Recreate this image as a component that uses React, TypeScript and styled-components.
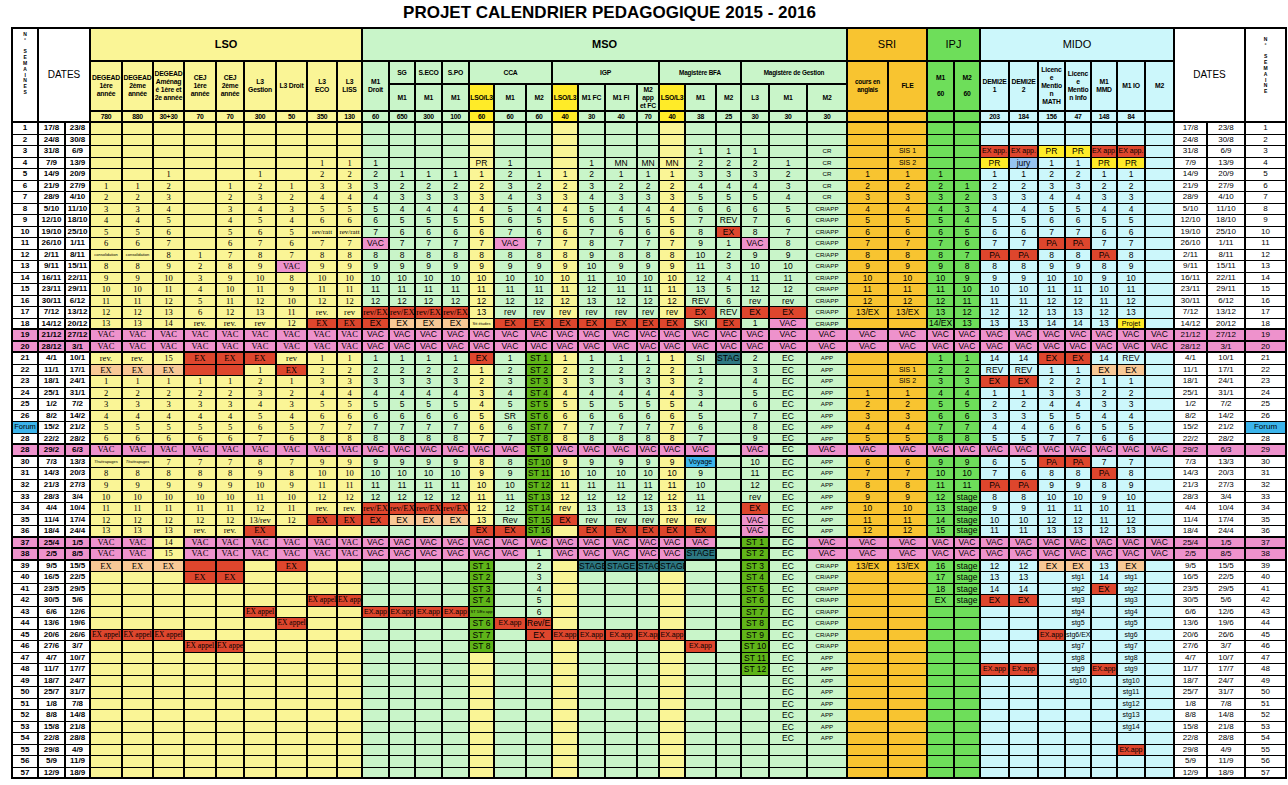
import React from 'react';
import styled, { createGlobalStyle } from 'styled-components';

const SANS = '"Liberation Sans", Arial, sans-serif';
const SERIF = '"Liberation Serif", "Times New Roman", serif';

const C = {
  white: '#ffffff',
  lso: '#FAF596',
  mso: '#C9F5C9',
  hi: '#FFEB28',
  sri: '#F8C430',
  ipj: '#6EDE5A',
  mido: '#CCF7FB',
  vac: '#EE92CC',
  red: '#DE462D',
  peach: '#F8C896',
  st: '#5FB419',
  teal: '#2D7882',
  blue: '#3CB4EB',
  jury: '#96C3F0',
};

const CODE: Record<string, string> = {
  r: C.red, p: C.peach, s: C.st, t: C.teal, b: C.blue, j: C.jury, y: C.hi, l: C.lso, v: C.vac,
};

const WIDTHS = [26, 27, 25, 32, 31, 31, 32, 28, 32, 31, 30, 25, 27, 26, 27, 27, 25, 32, 26, 26, 27, 32, 22, 26, 31, 25, 28, 38, 40, 41, 39, 27, 26, 29, 29, 27, 26, 26, 28, 29, 33, 38, 41];

const GlobalStyle = createGlobalStyle`
  html, body { margin: 0; padding: 0; background: #fff; }
  body { font-family: ${SANS}; color: #000; }
`;

const Page = styled.div`
  width: 1288px;
  height: 785px;
  overflow: hidden;
`;

const Title = styled.div`
  box-sizing: border-box;
  height: 27px;
  padding: 4px 69px 0 0;
  text-align: center;
  font-family: ${SANS};
  font-weight: 700;
  font-size: 17px;
  line-height: 17px;
`;

const SheetWrap = styled.div`
  padding-left: 11px;
`;

const Sheet = styled.div`
  display: grid;
  grid-template-columns: ${WIDTHS.map((w) => `${w}px`).join(' ')};
  grid-template-rows: 33px 23px 27px 11px repeat(57, 11.526px);
  width: max-content;
  border-left: 2px solid #000;
  border-top: 2px solid #000;
`;

const Head = styled.div<{
  $c: number; $cs: number; $r: number; $rs: number; $bg: string;
  $size: number; $bold: boolean; $lh: number; $top?: number;
}>`
  grid-column: ${(p) => p.$c + 1} / span ${(p) => p.$cs};
  grid-row: ${(p) => p.$r + 1} / span ${(p) => p.$rs};
  box-sizing: border-box;
  background: ${(p) => p.$bg};
  border-right: 2px solid #000;
  border-bottom: 2px solid #000;
  display: flex;
  flex-direction: column;
  align-items: center;
  justify-content: ${(p) => (p.$top !== undefined ? 'flex-start' : 'center')};
  padding-top: ${(p) => p.$top ?? 0}px;
  text-align: center;
  white-space: pre-line;
  font-family: ${SANS};
  font-size: ${(p) => p.$size}px;
  font-weight: ${(p) => (p.$bold ? 700 : 400)};
  line-height: ${(p) => p.$lh}px;
  letter-spacing: ${(p) => (p.$size < 8 ? '-0.2px' : '0')};
  overflow: hidden;
  min-width: 0;
`;

const Letter = styled.span`
  display: block;
  height: 5.8px;
  font-size: 5px;
  line-height: 5.8px;
  font-weight: 700;
`;

const Cell = styled.div<{ $bg: string; $size: number; $serif: boolean; $bold: boolean; $thick: boolean }>`
  box-sizing: border-box;
  background: ${(p) => p.$bg};
  border-right: 2px solid #000;
  border-bottom: ${(p) => (p.$thick ? 2 : 1)}px solid #000;
  font-family: ${(p) => (p.$serif ? SERIF : SANS)};
  font-size: ${(p) => p.$size}px;
  font-weight: ${(p) => (p.$bold ? 700 : 400)};
  line-height: ${(p) => (p.$thick ? 9.5 : 10.5)}px;
  text-align: center;
  white-space: nowrap;
  overflow: hidden;
  min-width: 0;
`;

type HeadDef = {
  c: number; cs?: number; r: number; rs?: number; t?: string; bg?: string;
  size?: number; bold?: boolean; lh?: number; letters?: string[]; top?: number;
};

const SUB = { size: 6.8, bold: true, lh: 8 };

const HEAD: HeadDef[] = [
  { c: 0, r: 0, rs: 4, bg: C.white, letters: ['N', '°', '', 'S', 'E', 'M', 'A', 'I', 'N', 'E', 'S'], top: 3 },
  { c: 1, cs: 2, r: 0, rs: 4, t: 'DATES', bg: C.white, size: 10, lh: 12 },
  { c: 3, cs: 9, r: 0, t: 'LSO', bg: C.lso, size: 11, bold: true, lh: 13 },
  { c: 12, cs: 17, r: 0, t: 'MSO', bg: C.mso, size: 11, bold: true, lh: 13 },
  { c: 29, cs: 2, r: 0, t: 'SRI', bg: C.sri, size: 11, lh: 13 },
  { c: 31, cs: 2, r: 0, t: 'IPJ', bg: C.ipj, size: 11, lh: 13 },
  { c: 33, cs: 7, r: 0, t: 'MIDO', bg: C.mido, size: 11, lh: 13 },
  { c: 40, cs: 2, r: 0, rs: 4, t: 'DATES', bg: C.white, size: 10, lh: 12 },
  { c: 42, r: 0, rs: 4, bg: C.white, letters: ['N', '°', '', 'S', 'E', 'M', 'A', 'I', 'N', 'E'], top: 8 },
  // LSO sub headers
  ...[
    'DEGEAD\n1ère\nannée', 'DEGEAD\n2ème\nannée', 'DEGEAD\nAménag\né 1ère et\n2e année', 'CEJ\n1ère\nannée',
    'CEJ\n2ème\nannée', 'L3\nGestion', 'L3 Droit', 'L3\nECO', 'L3\nLISS',
  ].map((t, i) => ({ c: 3 + i, r: 1, rs: 2, t, bg: C.lso, ...SUB })),
  ...['780', '880', '30+30', '70', '70', '300', '50', '350', '130'].map((t, i) => ({ c: 3 + i, r: 3, t, bg: C.lso, ...SUB })),
  // MSO
  { c: 12, r: 1, rs: 2, t: 'M1\nDroit', bg: C.mso, ...SUB },
  { c: 13, r: 1, t: 'SG', bg: C.mso, ...SUB },
  { c: 14, r: 1, t: 'S.ECO', bg: C.mso, ...SUB },
  { c: 15, r: 1, t: 'S.PO', bg: C.mso, ...SUB },
  { c: 16, cs: 3, r: 1, t: 'CCA', bg: C.mso, ...SUB },
  { c: 19, cs: 4, r: 1, t: 'IGP', bg: C.mso, ...SUB },
  { c: 23, cs: 3, r: 1, t: 'Magistère BFA', bg: C.mso, ...SUB, size: 6.4 },
  { c: 26, cs: 3, r: 1, t: 'Magistère de Gestion', bg: C.mso, ...SUB, size: 6.4 },
  ...['M1', 'M1', 'M1', 'LSO/L3', 'M1', 'M2', 'LSO/L3', 'M1 FC', 'M1 FI', 'M2\napp\net FC', 'LSO/L3', 'M1', 'M2', 'L3', 'M1', 'M2'].map(
    (t, i) => ({ c: 13 + i, r: 2, t, bg: t === 'LSO/L3' ? C.hi : C.mso, ...SUB }),
  ),
  ...['60', '650', '300', '100', '60', '60', '60', '40', '30', '40', '70', '40', '38', '25', '30', '30', '30'].map((t, i) => ({
    c: 12 + i, r: 3, t, bg: [16, 19, 23].includes(12 + i) ? C.hi : C.mso, ...SUB,
  })),
  // SRI
  { c: 29, r: 1, rs: 2, t: 'cours en\nanglais', bg: C.sri, ...SUB, size: 6.4 },
  { c: 30, r: 1, rs: 2, t: 'FLE', bg: C.sri, ...SUB },
  { c: 29, r: 3, t: '', bg: C.sri },
  { c: 30, r: 3, t: '', bg: C.sri },
  // IPJ
  { c: 31, r: 1, rs: 2, t: 'M1\n\n60', bg: C.ipj, ...SUB },
  { c: 32, r: 1, rs: 2, t: 'M2\n\n60', bg: C.ipj, ...SUB },
  { c: 31, r: 3, t: '', bg: C.ipj },
  { c: 32, r: 3, t: '', bg: C.ipj },
  // MIDO
  ...['DEMI2E\n1', 'DEMI2E\n2', 'Licenc\ne\nMentio\nn\nMATH', 'Licenc\ne\nMentio\nn Info', 'M1\nMMD', 'M1 IO', 'M2'].map((t, i) => ({
    c: 33 + i, r: 1, rs: 2, t, bg: C.mido, ...SUB,
  })),
  ...['203', '184', '156', '47', '148', '84', ''].map((t, i) => ({ c: 33 + i, r: 3, t, bg: C.mido, ...SUB })),
];

const ROWS: string[] = [
  '@',
  '@',
  '@24=1;25=1;26=1;28=CR;30=SIS 1;33=r~EX app.;34=r~EX app.;35=y~PR;36=y~PR;37=r~EX app.;38=r~EX app.',
  '@10=1;11=1;12=1;16=PR;17=1;20=1;21=MN;22=MN;23=MN;24=2;25=2;26=2;27=1;28=CR;30=SIS 2;33=y~PR;34=j~jury;35=1;36=1;37=y~PR;38=y~PR',
  ',,1,,,1,,2,2|2,1,1,1,1,2,1,1,2,1,1,1,3,3,3,2,CR|1,1|1,|1,1,2,2,1,1',
  '1,1,2,,1,2,1,3,3|3,2,2,2,2,3,2,2,3,2,2,2,4,4,4,3,CR|2,2|2,1|2,2,3,3,2,2',
  '2,2,3,,2,3,2,4,4|4,3,3,3,3,4,3,3,4,3,3,3,5,5,5,4,CR|3,3|3,2|3,3,4,4,3,3',
  '3,3,4,,3,4,3,5,5|5,4,4,4,4,5,4,4,5,4,4,4,6,6,6,5,CR/APP|4,4|4,3|4,4,5,5,4,4',
  '4,4,5,,4,5,4,6,6|6,5,5,5,5,6,5,5,6,5,5,5,7,REV,7,6,CR/APP|5,5|5,4|5,5,6,6,5,5',
  '5,5,6,,5,6,5,rev/ratt,rev/ratt|7,6,6,6,6,7,6,6,7,6,6,6,8,r~EX,8,7,CR/APP|6,6|6,5|6,6,7,7,6,6',
  '6,6,7,,6,7,6,7,7|VAC,7,7,7,7,VAC,7,7,8,7,7,7,9,1,VAC,8,CR/APP|7,7|7,6|7,7,r~PA,r~PA,7,7',
  'consolidation,consolidation,8,1,7,8,7,8,8|8,8,8,8,8,8,8,8,9,8,8,8,10,2,9,9,CR/APP|8,8|8,7|r~PA,r~PA,8,8,r~PA,8',
  '8,8,9,2,8,9,VAC,9,9|9,9,9,9,9,9,9,9,10,9,9,9,11,3,10,10,CR/APP|9,9|9,8|8,8,9,9,8,9',
  '9,9,10,3,9,10,8,10,10|10,10,10,10,10,10,10,10,11,10,10,10,12,4,11,11,CR/APP|10,10|10,9|9,9,10,10,9,10',
  '10,10,11,4,10,11,9,11,11|11,11,11,11,11,11,11,11,12,11,11,11,13,5,12,12,CR/APP|11,11|11,10|10,10,11,11,10,11',
  '11,11,12,5,11,12,10,12,12|12,12,12,12,12,12,12,12,13,12,12,12,REV,6,rev,rev,CR/APP|12,12|12,11|11,11,12,12,11,12',
  '12,12,13,6,12,13,11,rev.,rev|r~rev/EX,r~rev/EX,r~rev/EX,r~rev/EX,13,rev,rev,rev,rev,rev,rev,rev,r~EX,REV,r~EX,r~EX,CR/APP|13/EX,13/EX|13,12|12,12,13,13,12,13',
  '13,13,14,rev.,rev.,rev,12,r~EX,r~EX|r~EX,p~EX,p~EX,p~EX,Stt études,r~EX,r~EX,r~EX,r~EX,r~EX,r~EX,r~EX,SKI,r~EX,1,VAC,CR/APP|,|14/EX,13|13,13,14,14,13,y~Projet',
  'VAC*',
  'VAC*',
  'rev.,rev.,15,r~EX,r~EX,r~EX,rev,1,1|1,1,1,1,r~EX,1,s~ST 1,1,1,1,1,1,SI,t~STAGE,2,EC,APP|,|1,1|14,14,r~EX,r~EX,14,REV',
  'p~EX,p~EX,p~EX,r~,r~,1,r~EX,2,2|2,2,2,2,1,2,s~ST 2,2,2,2,2,2,1,,3,EC,APP|,SIS 1|2,2|REV,REV,1,1,p~EX,p~EX',
  '1,1,1,1,1,2,1,3,3|3,3,3,3,2,3,s~ST 3,3,3,3,3,3,2,,4,EC,APP|,SIS 2|3,3|r~EX,r~EX,2,2,1,1',
  '2,2,2,2,2,3,2,4,4|4,4,4,4,3,4,s~ST 4,4,4,4,4,4,3,,5,EC,APP|1,1|4,4|1,1,3,3,2,2',
  '3,3,3,3,3,4,3,5,5|5,5,5,5,4,5,s~ST 5,5,5,5,5,5,4,,6,EC,APP|2,2|5,5|2,2,4,4,3,3',
  '4,4,4,4,4,5,4,6,6|6,6,6,6,5,SR,s~ST 6,6,6,6,6,6,5,,7,EC,APP|3,3|6,6|3,3,5,5,4,4',
  '5,5,5,5,5,6,5,7,7|7,7,7,7,6,6,s~ST 7,7,7,7,7,7,6,,8,EC,APP|4,4|7,7|4,4,6,6,5,5',
  '6,6,6,6,6,7,6,8,8|8,8,8,8,7,7,s~ST 8,8,8,8,8,8,7,,9,EC,APP|5,5|8,8|5,5,7,7,6,6',
  'VAC,VAC,VAC,VAC,VAC,VAC,VAC,VAC,VAC|VAC,VAC,VAC,VAC,VAC,VAC,s~ST 9,VAC,VAC,VAC,VAC,VAC,VAC,,VAC,EC,VAC|VAC,VAC|VAC,VAC|VAC,VAC,VAC,VAC,VAC,VAC,VAC',
  '7/rattrapages,7/rattrapages,7,7,7,8,7,9,9|9,9,9,9,8,8,s~ST 10,9,9,9,9,9,b~Voyage,,10,EC,APP|6,6|9,9|6,5,r~PA,r~PA,7,7',
  '8,8,8,8,8,9,8,10,10|10,10,10,10,9,9,s~ST 11,10,10,10,10,10,9,,11,EC,APP|7,7|10,10|7,6,8,8,r~PA,8',
  '9,9,9,9,9,10,9,11,11|11,11,11,11,10,10,s~ST 12,11,11,11,11,11,10,,12,EC,APP|8,8|11,11|r~PA,r~PA,9,9,8,9',
  '10,10,10,10,10,11,10,12,12|12,12,12,12,11,11,s~ST 13,12,12,12,12,12,11,,rev,EC,APP|9,9|12,stage|8,8,10,10,9,10',
  '11,11,11,11,11,12,11,rev.,rev.|r~rev/EX,r~rev/EX,r~rev/EX,r~rev/EX,12,12,s~ST 14,rev,13,13,13,13,12,,r~EX,EC,APP|10,10|13,stage|9,9,11,11,10,11',
  '12,12,12,12,12,13/rev,12,r~EX,r~EX|r~EX,p~EX,p~EX,p~EX,13,Rev,s~ST 15,r~EX,rev,rev,rev,rev,l~rev,,VAC,EC,APP|11,11|14,stage|10,10,12,12,11,12',
  '13,13,13,rev.,rev.,r~EX,,,|,,,,r~EX,r~EX,s~ST 16,,r~EX,r~EX,r~EX,r~EX,r~EX,,VAC,EC,APP|12,12|15,stage|11,11,13,13,12,13',
  'VAC,VAC,14,VAC,VAC,VAC,VAC,VAC,VAC|VAC,VAC,VAC,VAC,VAC,VAC,VAC,VAC,VAC,VAC,VAC,VAC,VAC,,s~ST 1,EC,VAC|VAC,VAC|VAC,VAC|VAC,VAC,VAC,VAC,VAC,VAC,VAC',
  'VAC,VAC,15,VAC,VAC,VAC,VAC,VAC,VAC|VAC,VAC,VAC,VAC,VAC,VAC,1,VAC,VAC,VAC,VAC,VAC,t~STAGE,,s~ST 2,EC,VAC|VAC,VAC|VAC,VAC|VAC,VAC,VAC,VAC,VAC,VAC,VAC',
  '@3=p~EX;4=p~EX;5=p~EX;6=r~;7=r~;9=r~EX;16=s~ST 1;18=2;20=t~STAGE;21=t~STAGE;22=t~STAGE;23=t~STAGE;26=s~ST 3;27=EC;28=CR/APP;29=13/EX;30=13/EX;31=16;32=stage;33=12;34=12;35=p~EX;36=p~EX;37=13;38=p~EX',
  '@6=r~EX;7=r~EX;16=s~ST 2;18=3;26=s~ST 4;27=EC;28=CR/APP;31=17;32=stage;33=13;34=13;36=stg1;37=14;38=stg1',
  '@16=s~ST 3;18=4;26=s~ST 5;27=EC;28=CR/APP;31=18;32=stage;33=14;34=14;36=stg2;37=r~EX;38=stg2',
  '@10=r~EX appel;11=r~EX appel;16=s~ST 4;18=5;26=s~ST 6;27=EC;28=CR/APP;31=EX;32=stage;33=r~EX;34=r~EX;36=stg3;38=stg3',
  '@8=r~EX appel;12=r~EX.app;13=r~EX.app;14=r~EX.app;15=r~EX.app;16=s~ST 5/Ex app;18=6;26=s~ST 7;27=EC;28=CR/APP;36=stg4;38=stg4',
  '@9=r~EX appel;16=s~ST 6;17=r~EX.app;18=r~Rev/EX;26=s~ST 8;27=EC;28=CR/APP;36=stg5;38=stg5',
  '@3=r~EX appel;4=r~EX appel;5=r~EX appel;16=s~ST 7;18=r~EX;19=r~EX.app;20=r~EX.app;21=r~EX.app;22=r~EX.app;23=r~EX.app;26=s~ST 9;27=EC;28=CR/APP;35=r~EX.app;36=stg6/EX.app;38=stg6',
  '@6=r~EX appel;7=r~EX appel;16=s~ST 8;24=r~EX.app;26=s~ST 10;27=EC;28=CR/APP;36=stg7;38=stg7',
  '@26=s~ST 11;27=EC;28=APP;36=stg8;38=stg8',
  '@26=s~ST 12;27=EC;28=APP;33=r~EX.app;34=r~EX.app;36=stg9;37=r~EX.app;38=stg9',
  '@27=EC;28=APP;36=stg10;38=stg10',
  '@27=EC;28=APP;38=stg11',
  '@27=EC;28=APP;38=stg12',
  '@27=EC;28=APP;38=stg13',
  '@27=EC;28=APP;38=stg14',
  '@27=EC;28=APP',
  '@38=r~EX.app',
  '@',
  '@',
];

const GROUPS = [9, 17, 2, 2, 7];
const VAC_ROWS = [19, 20, 29, 37, 38];
const THICK_ROWS = [18, 19, 20, 28, 29, 36, 37, 38, 57];
const TINY = ['consolidation', '7/rattrapages', 'Stt études', 'ST 5/Ex app'];

function parseRow(spec: string): string[] {
  if (spec === 'VAC*') return Array(37).fill('VAC');
  if (spec.startsWith('@')) {
    const out: string[] = Array(37).fill('');
    spec
      .slice(1)
      .split(';')
      .filter(Boolean)
      .forEach((pair) => {
        const i = pair.indexOf('=');
        out[Number(pair.slice(0, i)) - 3] = pair.slice(i + 1);
      });
    return out;
  }
  const parts = spec.split('|');
  const out: string[] = [];
  GROUPS.forEach((n, gi) => {
    const vals = (parts[gi] ?? '').split(',');
    for (let i = 0; i < n; i++) out.push(vals[i] ?? '');
  });
  return out;
}

function colBg(c: number): string {
  if (c <= 2 || c >= 40) return C.white;
  if (c <= 11) return C.lso;
  if (c <= 28) return [16, 19, 23].includes(c) ? C.lso : C.mso;
  if (c <= 30) return C.sri;
  if (c <= 32) return C.ipj;
  return C.mido;
}

function sizeOf(t: string): number {
  if (TINY.includes(t)) return 4;
  if (t === 'CR' || t === 'CR/APP' || t === 'APP') return 6.2;
  if (t === 'EX appel') return 7.5;
  if (t === 'rev/ratt') return 7;
  if (/^stg/.test(t) || /^SIS/.test(t) || /app/.test(t) || t === 'Voyage' || t === 'Projet') return 7;
  return 8.5;
}

function fmt(d: Date) {
  return `${d.getDate()}/${d.getMonth() + 1}`;
}

const DATES = Array.from({ length: 57 }, (_, i) => [
  fmt(new Date(2015, 7, 17 + 7 * i)),
  fmt(new Date(2015, 7, 23 + 7 * i)),
]);

function HeaderCells() {
  return (
    <>
      {HEAD.map((h, i) => (
        <Head
          key={`h${i}`}
          $c={h.c}
          $cs={h.cs ?? 1}
          $r={h.r}
          $rs={h.rs ?? 1}
          $bg={h.bg ?? C.white}
          $size={h.size ?? 7}
          $bold={!!h.bold}
          $lh={h.lh ?? 9}
          $top={h.letters ? h.top : undefined}
        >
          {h.letters ? h.letters.map((l, j) => <Letter key={j}>{l || '\u00a0'}</Letter>) : h.t}
        </Head>
      ))}
    </>
  );
}

function BodyCells() {
  const cells: React.ReactNode[] = [];
  ROWS.forEach((spec, ri) => {
    const n = ri + 1;
    const vacRow = VAC_ROWS.includes(n);
    const thick = THICK_ROWS.includes(n);
    const side = vacRow ? C.vac : C.white;
    const [d1, d2] = DATES[ri];
    const forum = n === 27;
    const leftNum = forum ? 'Forum' : n === 29 ? '28' : String(n);
    const rightNum = forum ? 'Forum' : String(n);

    cells.push(
      <Cell key={`${n}-0`} $bg={forum ? C.blue : side} $size={forum ? 7.5 : 8} $serif={false} $bold={!forum} $thick={thick}>
        {leftNum}
      </Cell>,
      <Cell key={`${n}-1`} $bg={side} $size={8} $serif={false} $bold $thick={thick}>{d1}</Cell>,
      <Cell key={`${n}-2`} $bg={side} $size={8} $serif={false} $bold $thick={thick}>{d2}</Cell>,
    );

    parseRow(spec).forEach((raw, k) => {
      const col = k + 3;
      let bg = colBg(col);
      let text = raw;
      const m = raw.match(/^([a-z])~(.*)$/);
      if (m) {
        bg = CODE[m[1]];
        text = m[2];
      } else if (raw === 'VAC') {
        bg = C.vac;
      }
      const serif = (col <= 11 || text === 'rev/EX') && !TINY.includes(text);
      cells.push(
        <Cell key={`${n}-${col}`} $bg={bg} $size={sizeOf(text)} $serif={serif} $bold={false} $thick={thick}>
          {text}
        </Cell>,
      );
    });

    cells.push(
      <Cell key={`${n}-40`} $bg={side} $size={8} $serif={false} $bold={false} $thick={thick}>{d1}</Cell>,
      <Cell key={`${n}-41`} $bg={side} $size={8} $serif={false} $bold={false} $thick={thick}>{d2}</Cell>,
      <Cell key={`${n}-42`} $bg={forum ? C.blue : side} $size={8} $serif={false} $bold={false} $thick={thick}>
        {rightNum}
      </Cell>,
    );
  });
  return <>{cells}</>;
}

export default function App() {
  return (
    <Page>
      <GlobalStyle />
      <Title>PROJET CALENDRIER PEDAGOGIQUE 2015 - 2016</Title>
      <SheetWrap>
        <Sheet>
          <HeaderCells />
          <BodyCells />
        </Sheet>
      </SheetWrap>
    </Page>
  );
}
